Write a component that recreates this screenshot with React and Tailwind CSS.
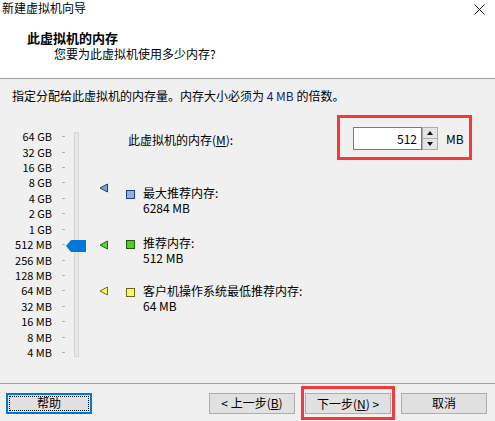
import React from "react";

const FONT = { fontFamily: '"Noto Sans CJK SC", "Noto Sans", sans-serif' };

const SCALE = [
  "64 GB", "32 GB", "16 GB", "8 GB", "4 GB", "2 GB", "1 GB",
  "512 MB", "256 MB", "128 MB", "64 MB", "32 MB", "16 MB", "8 MB", "4 MB",
];

// small left-pointing marker triangles beside the slider
const MARKERS = [
  { top: 79, fill: "#7aa2d8", stroke: "#1f3f74" },
  { top: 136, fill: "#5fcf3a", stroke: "#1c6b12" },
  { top: 182, fill: "#f6f25a", stroke: "#7c7410" },
];

function Marker({ top, fill, stroke }) {
  return (
    <svg className="absolute left-[20px]" style={{ top }} width="10" height="10" viewBox="0 0 10 10">
      <path d="M1 5 L8.5 1 L8.5 9 Z" fill={fill} stroke={stroke} strokeWidth="1" strokeLinejoin="round" />
    </svg>
  );
}

function Legend({ color, border, title, value, className }) {
  return (
    <div className={`flex items-start gap-[8px] ${className}`}>
      <div className={`mt-[5px] h-[9px] w-[9px] border ${color} ${border}`} />
      <div className="text-[12px] leading-[15px] text-black">
        <div>{title}</div>
        <div>{value}</div>
      </div>
    </div>
  );
}

function Btn({ children, className = "" }) {
  return (
    <div
      className={`flex h-[21px] w-[86px] items-center justify-center border border-[#adadad] bg-[#e1e1e1] text-[12px] text-black ${className}`}
    >
      {children}
    </div>
  );
}

export default function App() {
  return (
    <div className="flex h-[421px] w-[495px] flex-col overflow-hidden bg-[#f0f0f0]" style={FONT}>
      {/* header */}
      <div className="h-[79px] shrink-0 border-b border-[#a0a0a0] bg-white">
        <div className="flex items-center justify-between pl-[2px] pr-[10px]">
          <span className="text-[12px] leading-[16px] text-black">新建虚拟机向导</span>
          <svg width="11" height="11" viewBox="0 0 11 11" className="mt-[2px]">
            <path d="M0.5 0.5 L10.5 10.5 M10.5 0.5 L0.5 10.5" stroke="#111" strokeWidth="1" />
          </svg>
        </div>
        <div className="mt-[14px] pl-[27px] text-[13px] font-bold leading-[16px] text-black">此虚拟机的内存</div>
        <div className="pl-[54px] text-[12px] leading-[15px] text-black">您要为此虚拟机使用多少内存?</div>
      </div>

      {/* body */}
      <div className="h-[304px] shrink-0">
        <div className="pl-[12px] pt-[9px] text-[12px] leading-[16px] text-black">
          指定分配给此虚拟机的内存量。内存大小必须为 <span className="text-[#1a1a6e]">4 MB</span> 的倍数。
        </div>

        <div className="flex">
          {/* scale labels + ticks */}
          <div className="flex flex-col pt-[25px]">
            {SCALE.map((s) => (
              <div key={s} className="flex h-[15.43px] items-center">
                <span className="w-[52px] text-right text-[11px] leading-[15px] text-black">{s}</span>
                <span className="ml-[10px] h-px w-[3px] bg-[#b5b5b5]" />
              </div>
            ))}
          </div>

          {/* track */}
          <div className="relative ml-[9px] mt-[28px] h-[225px] w-[5px] border border-[#d6d6d6] bg-[#e7e7e7]">
            <svg className="absolute left-[-9px] top-[107px]" width="20" height="12" viewBox="0 0 20 12">
              <path d="M0 6 L5 0 L20 0 L20 12 L5 12 Z" fill="#0078d7" />
            </svg>
          </div>

          {/* markers */}
          <div className="relative w-[47px]">
            {MARKERS.map((m) => (
              <Marker key={m.top} {...m} />
            ))}
          </div>

          {/* right content */}
          <div className="flex-1 pt-[11px]">
            <div className="flex items-center justify-between pr-[23px]">
              <span className="mt-[5px] pl-[2px] text-[12px] text-black">
                此虚拟机的内存(<span className="underline">M</span>):
              </span>
              <div className="flex h-[45px] w-[135px] items-start border-[3px] border-[#f23a3a] pl-[13px] pt-[9px]">
                <div className="flex h-[23px] w-[69px] items-center justify-end border border-[#7a7a7a] bg-white pr-[4px] text-[12px] text-black">
                  512
                </div>
                <div className="flex h-[23px] w-[16px] flex-col">
                  <div className="flex h-[11.5px] items-center justify-center border border-[#adadad] bg-[#e5e5e5]">
                    <svg width="6" height="4" viewBox="0 0 6 4"><path d="M3 0 L6 4 L0 4 Z" fill="#111" /></svg>
                  </div>
                  <div className="flex h-[11.5px] items-center justify-center border border-t-0 border-[#adadad] bg-[#e5e5e5]">
                    <svg width="6" height="4" viewBox="0 0 6 4"><path d="M0 0 L6 0 L3 4 Z" fill="#111" /></svg>
                  </div>
                </div>
                <span className="ml-[8px] mt-[3px] text-[12px] text-black">MB</span>
              </div>
            </div>

            <Legend className="mt-[25px]" color="bg-[#8fb0e0]" border="border-[#1f3f74]" title="最大推荐内存:" value="6284 MB" />
            <Legend className="mt-[20px]" color="bg-[#56c82f]" border="border-[#1c5e10]" title="推荐内存:" value="512 MB" />
            <Legend className="mt-[18px]" color="bg-[#f8f47a]" border="border-[#6e6810]" title="客户机操作系统最低推荐内存:" value="64 MB" />
          </div>
        </div>
      </div>

      {/* footer */}
      <div className="flex flex-1 items-center border-t border-[#a0a0a0] pr-[8px] pt-[1px]">
        <div className="ml-[6px] flex h-[21px] w-[86px] items-center justify-center border-2 border-[#0078d7] bg-[#e1e1e1] p-px">
          <div className="flex h-full w-full items-center justify-center border border-dotted border-black text-[12px] text-black">
            帮助
          </div>
        </div>
        <div className="flex-1" />
        <Btn className="w-[85px]">
          &lt; 上一步(<span className="underline">B</span>)
        </Btn>
        <div className="mx-[6px] border-[3px] border-[#f23a3a] px-px pb-[3px] pt-[4px]">
          <Btn>
            下一步(<span className="underline">N</span>) &gt;
          </Btn>
        </div>
        <Btn className="w-[85px]">取消</Btn>
      </div>
    </div>
  );
}
